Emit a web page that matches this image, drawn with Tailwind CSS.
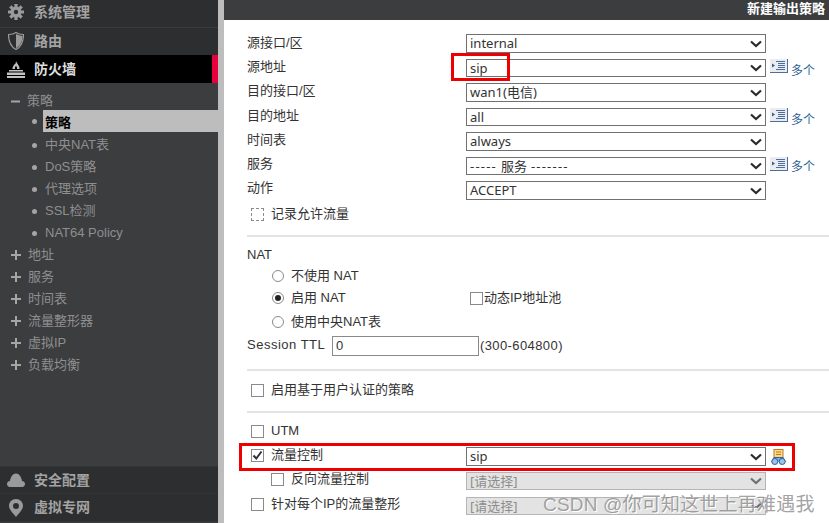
<!DOCTYPE html>
<html lang="zh">
<head>
<meta charset="UTF-8">
<title>新建输出策略</title>
<script src="https://cdn.jsdelivr.net/npm/@tailwindcss/browser@4"></script>
</head>
<body class="bg-white overflow-hidden">
<svg class="hidden">
  <symbol id="chev" viewBox="0 0 12 8"><path d="M1 1.500 L6 6 L11 1.500" fill="none" stroke="currentColor" stroke-width="2.200"/></symbol>
  <symbol id="many" viewBox="0 0 18 14"><rect width="18" height="13" fill="#ececf0"/><path d="M0 13.500H18M17.500 0V13.500" stroke="#4a6f9c" fill="none"/><path d="M2 4.500 L5 6.500 L2 8.500Z" fill="#2f6296"/><path d="M6 2.500H15M8 4.500H15M8 6.500H15M8 8.500H15M6 10.500H15" stroke="#4a6f9c" fill="none"/></symbol>
</svg>
<div class="relative w-[829px] h-[523px] overflow-hidden flex font-['Liberation_Sans','Noto_Sans_CJK_SC',sans-serif] text-[13px] text-[#333]">

  <!-- left nav -->
  <aside class="w-[218px] h-[523px] shrink-0 bg-[#3c3d3f] flex flex-col text-[#9c9c9c]">
    <div class="h-[28px] pb-[3px] bg-[#2d2e30] border-b border-[#3a3b3d] flex items-center pl-[8px] gap-[10px] font-bold text-[14px] text-[#a3a3a3]">
      <svg class="w-[16px] h-[16px]" viewBox="0 0 16 16"><path d="M8 2.500 A5.500 5.500 0 1 0 8 13.500 A5.500 5.500 0 1 0 8 2.500Z M8 5.800 A2.200 2.200 0 1 1 8 10.200 A2.200 2.200 0 1 1 8 5.800Z" fill="#9a9a9a" fill-rule="evenodd"/><path d="M8 0V3.500M8 12.500V16M0 8H3.500M12.500 8H16M2.300 2.300L4.800 4.800M11.200 11.200L13.700 13.700M13.700 2.300L11.200 4.800M4.800 11.200L2.300 13.700" stroke="#9a9a9a" stroke-width="3.200"/></svg>
      <span>系统管理</span>
    </div>
    <div class="h-[27px] pb-[1px] bg-[#2d2e30] flex items-center pl-[8px] gap-[10px] font-bold text-[14px] text-[#a3a3a3]">
      <svg class="w-[16px] h-[18px]" viewBox="0 0 16 18"><path d="M8 0.500 C10 2 13 2.500 15.500 2.500 C15.500 9 13.500 14.500 8 17.500 C2.500 14.500 0.500 9 0.500 2.500 C3 2.500 6 2 8 0.500Z" fill="none" stroke="#9a9a9a" stroke-width="1.200"/><path d="M8 2 C10 3.200 12.500 3.800 14.500 3.800 C14.500 9 12.500 13.800 8 16.300Z" fill="#9a9a9a"/></svg>
      <span>路由</span>
    </div>
    <div class="h-[28px] bg-black border-r-[6px] border-[#e8003c] flex items-center pl-[7px] gap-[9px] font-bold text-[14px] text-[#dedede]">
      <svg class="w-[18px] h-[17px]" viewBox="0 0 18 17"><path d="M9 0 C10 3 13 5 12.500 8 H5.500 C5 6 7 5 7 3.500 C8 4 9 2 9 0Z M9 4.500 C8.500 6 7.500 6.500 8 8 H10 C10.500 6.500 9.500 6 9 4.500Z" fill="#c2c2c2" fill-rule="evenodd"/><path d="M2 9H16V10.500H2ZM0 11.500H18V14H0ZM0 15H18V17H0Z" fill="#c2c2c2"/></svg>
      <span>防火墙</span>
    </div>

    <div class="flex-1 pt-[5px] text-[13px] text-[#8f8f8f]">
      <div class="h-[22px] pt-[4px] flex items-center pl-[11px] gap-[7px]"><svg class="w-[9px] h-[9px]" viewBox="0 0 9 9"><path d="M0 4.500H10" stroke="#a5a5a5" stroke-width="2"/></svg><span>策略</span></div>
      <div class="h-[22px] flex items-center pl-[32px]">
        <span class="w-[5px] h-[5px] rounded-full bg-[#a5a5a5]"></span>
        <span class="ml-[6px] pl-[2px] flex-1 h-[22px] leading-[25px] bg-[#bdbdbd] text-black font-bold">策略</span>
      </div>
      <div class="h-[22px] pt-[4px] flex items-center pl-[32px] gap-[8px]"><span class="w-[5px] h-[5px] rounded-full bg-[#a5a5a5]"></span><span>中央NAT表</span></div>
      <div class="h-[22px] pt-[4px] flex items-center pl-[32px] gap-[8px]"><span class="w-[5px] h-[5px] rounded-full bg-[#a5a5a5]"></span><span>DoS策略</span></div>
      <div class="h-[22px] pt-[4px] flex items-center pl-[32px] gap-[8px]"><span class="w-[5px] h-[5px] rounded-full bg-[#a5a5a5]"></span><span>代理选项</span></div>
      <div class="h-[22px] pt-[4px] flex items-center pl-[32px] gap-[8px]"><span class="w-[5px] h-[5px] rounded-full bg-[#a5a5a5]"></span><span>SSL检测</span></div>
      <div class="h-[22px] pt-[4px] flex items-center pl-[32px] gap-[8px]"><span class="w-[5px] h-[5px] rounded-full bg-[#a5a5a5]"></span><span>NAT64 Policy</span></div>
      <div class="h-[22px] pt-[4px] flex items-center pl-[11px] gap-[7px]"><svg class="w-[10px] h-[10px]" viewBox="0 0 10 10"><path d="M0 5H10M5 0V10" stroke="#a5a5a5" stroke-width="2"/></svg><span>地址</span></div>
      <div class="h-[22px] pt-[4px] flex items-center pl-[11px] gap-[7px]"><svg class="w-[10px] h-[10px]" viewBox="0 0 10 10"><path d="M0 5H10M5 0V10" stroke="#a5a5a5" stroke-width="2"/></svg><span>服务</span></div>
      <div class="h-[22px] pt-[4px] flex items-center pl-[11px] gap-[7px]"><svg class="w-[10px] h-[10px]" viewBox="0 0 10 10"><path d="M0 5H10M5 0V10" stroke="#a5a5a5" stroke-width="2"/></svg><span>时间表</span></div>
      <div class="h-[22px] pt-[4px] flex items-center pl-[11px] gap-[7px]"><svg class="w-[10px] h-[10px]" viewBox="0 0 10 10"><path d="M0 5H10M5 0V10" stroke="#a5a5a5" stroke-width="2"/></svg><span>流量整形器</span></div>
      <div class="h-[22px] pt-[4px] flex items-center pl-[11px] gap-[7px]"><svg class="w-[10px] h-[10px]" viewBox="0 0 10 10"><path d="M0 5H10M5 0V10" stroke="#a5a5a5" stroke-width="2"/></svg><span>虚拟IP</span></div>
      <div class="h-[22px] pt-[4px] flex items-center pl-[11px] gap-[7px]"><svg class="w-[10px] h-[10px]" viewBox="0 0 10 10"><path d="M0 5H10M5 0V10" stroke="#a5a5a5" stroke-width="2"/></svg><span>负载均衡</span></div>
    </div>

    <div class="h-[28px] bg-[#2d2e30] border-t border-[#333436] border-b flex items-center pl-[7px] gap-[9px] font-bold text-[14px] text-[#a3a3a3]">
      <svg class="w-[18px] h-[14px]" viewBox="0 0 18 14"><path d="M3 14 C1 14 0 12.500 0 11 C0 9 1.500 8 3 8 C3.500 4 6 0.500 9 0.500 C12 0.500 14.500 4 15 8 C16.500 8 18 9 18 11 C18 12.500 17 14 15 14Z" fill="#9a9a9a"/></svg>
      <span>安全配置</span>
    </div>
    <div class="h-[28px] mb-[1px] bg-[#2d2e30] border-b border-[#333436] flex items-center pl-[9px] gap-[11px] font-bold text-[14px] text-[#a3a3a3]">
      <svg class="w-[14px] h-[18px]" viewBox="0 0 14 18"><path d="M7 0 C11 0 14 3 14 6.800 C14 11 9.500 14.500 7 18 C4.500 14.500 0 11 0 6.800 C0 3 3 0 7 0Z M7 4 A3 3 0 1 0 7 10 A3 3 0 1 0 7 4Z" fill="#9a9a9a" fill-rule="evenodd"/></svg>
      <span>虚拟专网</span>
    </div>
  </aside>
  <div class="w-[6px] shrink-0 bg-[#bdbdbd]"></div>

  <!-- form -->
  <main class="flex-1 min-w-0">
    <div class="h-[20px] bg-[#3c3d3f] text-white font-bold text-[13px] leading-[17px] text-right pr-[4px]">新建输出策略</div>
    <div class="pl-[23px] pt-[14px]">
      <div class="h-[25px] flex items-start">
        <span class="w-[219px] leading-[18px]">源接口/区</span>
        <div class="w-[300px] h-[19px] border-[1.5px] border-[#707070] pl-[3px] leading-[17px] flex justify-between items-center font-['Noto_Sans','Noto_Sans_CJK_SC',sans-serif]">internal<svg class="w-[12px] h-[8px] mr-[3px] text-[#2b2b2b]"><use href="#chev"/></svg></div>
      </div>
      <div class="h-[24px] flex items-start">
        <span class="w-[219px] leading-[16px]">源地址</span>
        <div class="w-[300px] h-[18px] border-[1.5px] border-[#707070] pl-[3px] leading-[16px] flex justify-between items-center font-['Noto_Sans','Noto_Sans_CJK_SC',sans-serif]">sip<svg class="w-[12px] h-[8px] mr-[3px] text-[#2b2b2b]"><use href="#chev"/></svg></div>
        <svg class="w-[18px] h-[14px] ml-[4px]"><use href="#many"/></svg>
        <span class="ml-[3px] mt-[3px] text-[12px] text-[#2d6196]">多个</span>
      </div>
      <div class="h-[25px] flex items-start">
        <span class="w-[219px] leading-[16px]">目的接口/区</span>
        <div class="w-[300px] h-[19px] border-[1.5px] border-[#707070] pl-[3px] leading-[17px] flex justify-between items-center font-['Noto_Sans','Noto_Sans_CJK_SC',sans-serif]">wan1(电信)<svg class="w-[12px] h-[8px] mr-[3px] text-[#2b2b2b]"><use href="#chev"/></svg></div>
      </div>
      <div class="h-[24px] flex items-start">
        <span class="w-[219px] leading-[16px]">目的地址</span>
        <div class="w-[300px] h-[18px] border-[1.5px] border-[#707070] pl-[3px] leading-[16px] flex justify-between items-center font-['Noto_Sans','Noto_Sans_CJK_SC',sans-serif]">all<svg class="w-[12px] h-[8px] mr-[3px] text-[#2b2b2b]"><use href="#chev"/></svg></div>
        <svg class="w-[18px] h-[14px] ml-[4px]"><use href="#many"/></svg>
        <span class="ml-[3px] mt-[3px] text-[12px] text-[#2d6196]">多个</span>
      </div>
      <div class="h-[25px] flex items-start">
        <span class="w-[219px] leading-[16px]">时间表</span>
        <div class="w-[300px] h-[19px] border-[1.5px] border-[#707070] pl-[3px] leading-[17px] flex justify-between items-center font-['Noto_Sans','Noto_Sans_CJK_SC',sans-serif]">always<svg class="w-[12px] h-[8px] mr-[3px] text-[#2b2b2b]"><use href="#chev"/></svg></div>
      </div>
      <div class="h-[24px] flex items-start">
        <span class="w-[219px] leading-[14px]">服务</span>
        <div class="w-[300px] h-[18px] border-[1.5px] border-[#707070] pl-[3px] leading-[16px] flex items-center font-['Noto_Sans','Noto_Sans_CJK_SC',sans-serif]"><span class="tracking-[1.2px]">-----</span><span class="mx-[4px]">服务</span><span class="tracking-[1.2px]">-------</span><svg class="w-[12px] h-[8px] mr-[3px] ml-auto text-[#2b2b2b]"><use href="#chev"/></svg></div>
        <svg class="w-[18px] h-[14px] ml-[4px]"><use href="#many"/></svg>
        <span class="ml-[3px] mt-[1px] text-[12px] text-[#2d6196]">多个</span>
      </div>
      <div class="h-[25px] flex items-start">
        <span class="w-[219px] leading-[14px]">动作</span>
        <div class="w-[300px] h-[19px] border-[1.5px] border-[#707070] pl-[3px] leading-[17px] flex justify-between items-center font-['Noto_Sans','Noto_Sans_CJK_SC',sans-serif]">ACCEPT<svg class="w-[12px] h-[8px] mr-[3px] text-[#2b2b2b]"><use href="#chev"/></svg></div>
      </div>
      <div class="h-[16px] flex items-center pl-[4px] gap-[7px]">
        <span class="w-[13px] h-[13px] border border-dashed border-[#8a8a8a]"></span>
        <span>记录允许流量</span>
      </div>
      <div class="h-[2px] bg-[#e3e3e3] mt-[13px]"></div>

      <div class="h-[18px] mt-[9px] leading-[18px]">NAT</div>
      <div class="h-[22px] mt-[1px] pl-[25px] flex items-center gap-[7px]">
        <span class="w-[12px] h-[12px] rounded-full border border-[#8a8a8a]"></span><span>不使用 NAT</span>
      </div>
      <div class="h-[24px] -mt-[1px] pl-[25px] flex items-center">
        <span class="w-[12px] h-[12px] rounded-full border border-[#8a8a8a] flex items-center justify-center"><span class="w-[6px] h-[6px] rounded-full bg-[#222]"></span></span>
        <span class="ml-[7px] w-[179px]">启用 NAT</span>
        <span class="w-[13px] h-[13px] border border-[#8a8a8a]"></span><span class="ml-[1px]">动态IP地址池</span>
      </div>
      <div class="h-[22px] mt-[1px] pl-[25px] flex items-center gap-[7px]">
        <span class="w-[12px] h-[12px] rounded-full border border-[#8a8a8a]"></span><span>使用中央NAT表</span>
      </div>
      <div class="h-[24px] mt-[1px] flex items-center">
        <span class="w-[85px] tracking-[0.5px] -mt-[2px]">Session TTL</span>
        <span class="w-[147px] h-[20px] border border-[#8a8a8a] pl-[3px] leading-[18px]">0</span>
        <span class="ml-[1px] tracking-[0.4px]">(300-604800)</span>
      </div>
      <div class="h-[2px] bg-[#e3e3e3] mt-[11px]"></div>
      <div class="h-[20px] mt-[9px] pl-[4px] flex items-center gap-[7px]">
        <span class="w-[13px] h-[13px] border border-[#8a8a8a]"></span><span>启用基于用户认证的策略</span>
      </div>
      <div class="h-[2px] bg-[#e3e3e3] mt-[11px]"></div>

      <div class="h-[20px] mt-[8px] pl-[4px] flex items-center gap-[7px]">
        <span class="w-[13px] h-[13px] border border-[#8a8a8a]"></span><span>UTM</span>
      </div>
      <div class="h-[19px] mt-[6px] flex items-center">
        <span class="ml-[4px] -mt-[2px] w-[13px] h-[13px] border border-[#8a8a8a] flex items-center justify-center">
          <svg class="w-[11px] h-[11px]" viewBox="0 0 11 11"><path d="M1.500 5.500L4.300 8.500L9.500 1.500" fill="none" stroke="#333" stroke-width="2"/></svg>
        </span>
        <span class="ml-[7px] w-[195px] -mt-[4px]">流量控制</span>
        <div class="w-[300px] h-[19px] border-[1.5px] border-[#707070] pl-[3px] leading-[17px] flex justify-between items-center font-['Noto_Sans','Noto_Sans_CJK_SC',sans-serif]">sip<svg class="w-[12px] h-[8px] mr-[3px] text-[#2b2b2b]"><use href="#chev"/></svg></div>
        <svg class="w-[15px] h-[16px] ml-[5px]" viewBox="0 0 15 16"><rect x="3" y="0.500" width="9" height="9" fill="#fbd98a" stroke="#c9761d"/><path d="M5 3H10M5 5.500H10" stroke="#c9761d"/><path d="M0.500 13 L3 8.500 H12 L14.500 13" fill="#7fb0e0" stroke="#2f6296"/><circle cx="3.800" cy="12.500" r="3" fill="#9cc4ea" stroke="#2f6296"/><circle cx="11.200" cy="12.500" r="3" fill="#9cc4ea" stroke="#2f6296"/></svg>
      </div>
      <div class="h-[19px] mt-[5px] flex items-center">
        <span class="ml-[24px] -mt-[3px] w-[13px] h-[13px] border border-[#8a8a8a]"></span>
        <span class="ml-[7px] w-[175px] -mt-[4px]">反向流量控制</span>
        <div class="w-[300px] h-[18px] border-[1.5px] border-[#b5b5b5] bg-[#e3e3e3] pl-[3px] leading-[16px] flex justify-between items-center text-[#8d8d8d] font-['Noto_Sans','Noto_Sans_CJK_SC',sans-serif]">[请选择]<svg class="w-[12px] h-[8px] mr-[3px] text-[#707070]"><use href="#chev"/></svg></div>
      </div>
      <div class="h-[19px] mt-[6px] flex items-center">
        <span class="ml-[4px] -mt-[3px] w-[13px] h-[13px] border border-[#8a8a8a]"></span>
        <span class="ml-[7px] w-[195px] -mt-[4px]">针对每个IP的流量整形</span>
        <div class="w-[300px] h-[18px] border-[1.5px] border-[#b5b5b5] bg-[#e3e3e3] pl-[3px] leading-[16px] flex justify-between items-center text-[#8d8d8d] font-['Noto_Sans','Noto_Sans_CJK_SC',sans-serif]">[请选择]<svg class="w-[12px] h-[8px] mr-[3px] text-[#707070]"><use href="#chev"/></svg></div>
      </div>
    </div>
  </main>

  <!-- red markup drawn over the screenshot -->
  <div class="absolute left-[451px] top-[53px] w-[59px] h-[28px] border-[3px] border-[#ee0000]"></div>
  <div class="absolute left-[239px] top-[443px] w-[556px] h-[28px] border-[3px] border-[#ee0000]"></div>
  <div class="absolute left-[543px] top-[492px] text-[19px] tracking-[0.2px] leading-[26px] text-[#8a8a8a]/80 [text-shadow:1px_1px_0_#ffffff] whitespace-nowrap">CSDN @你可知这世上再难遇我</div>
</div>
</body>
</html>
